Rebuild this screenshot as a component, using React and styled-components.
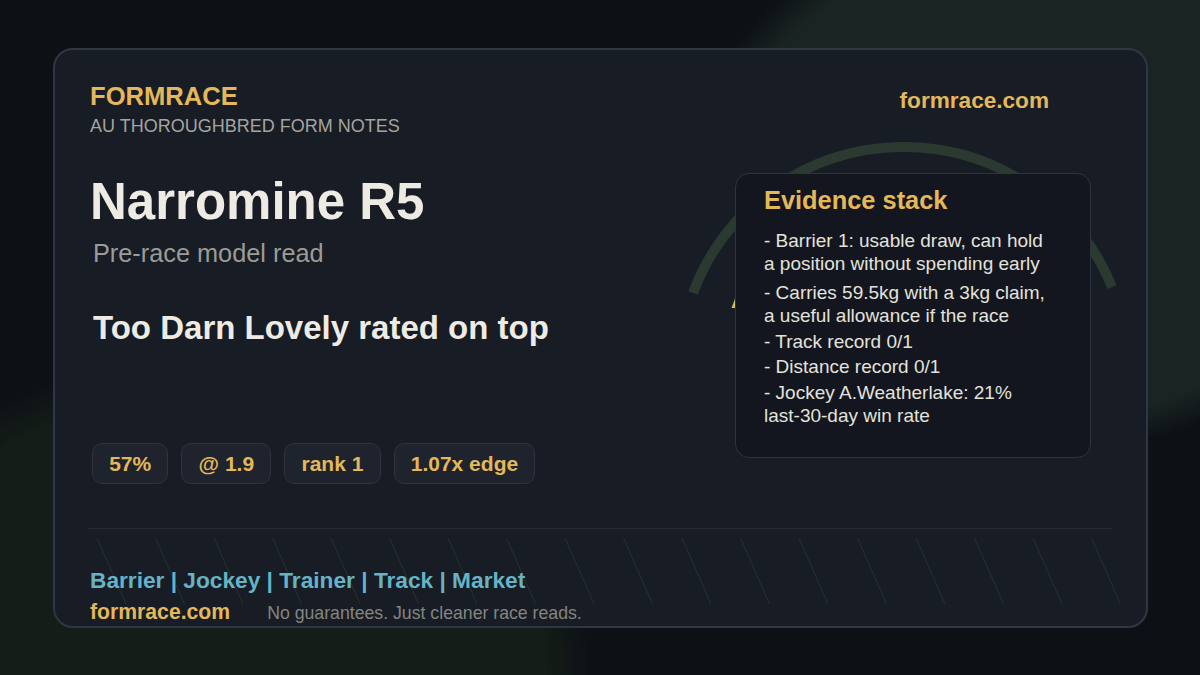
import React from "react";
import styled, { createGlobalStyle } from "styled-components";

const GlobalStyle = createGlobalStyle`
    html, body {
        margin: 0;
        padding: 0;
        background: #0d1116;
    }
    * {
        box-sizing: border-box;
    }
`;

const gold = "#e4b85a";

const Page = styled.div`
    width: 1200px;
    height: 675px;
    overflow: hidden;
    padding: 48px 53px;
    font-family: "Liberation Sans", Arial, sans-serif;
    background:
        radial-gradient(ellipse 392px 320px at 200px 680px, #141d17 0%, #141d17 88%, rgba(20, 29, 23, 0) 100%),
        radial-gradient(ellipse 350px 273px at 1040px 180px, #1a2422 0%, #1a2422 88%, rgba(26, 36, 34, 0) 100%),
        #0d1116;
`;

const Card = styled.div`
    position: relative;
    width: 1095px;
    height: 580px;
    padding: 30px 33px 0;
    background: #171c25;
    border: 2px solid #313645;
    border-radius: 20px;
    overflow: hidden;
`;

const Header = styled.header`
    display: flex;
    justify-content: space-between;
    align-items: flex-start;
`;

const Brand = styled.div`
    margin-left: 2px;
    font-size: 25.6px;
    line-height: 32px;
    font-weight: 700;
    color: ${gold};
`;

const Tagline = styled.div`
    margin: 3px 0 0 2px;
    font-size: 18px;
    line-height: 22px;
    color: #a5a59f;
`;

const Site = styled.div`
    margin: 6px 64px 0 0;
    font-size: 22.6px;
    line-height: 30px;
    font-weight: 700;
    color: ${gold};
`;

const Main = styled.main`
    display: flex;
    justify-content: space-between;
    margin-top: 36px;
`;

const Title = styled.h1`
    margin: 1px 0 0 2px;
    font-size: 51px;
    line-height: 56px;
    font-weight: 700;
    color: #eeebe4;
`;

const Subtitle = styled.div`
    margin: 8px 0 0 5px;
    font-size: 25.3px;
    line-height: 30px;
    color: #9c9c96;
`;

const Pick = styled.div`
    margin: 40px 0 0 5px;
    font-size: 33px;
    line-height: 40px;
    font-weight: 700;
    color: #eeebe4;
`;

const Chips = styled.div`
    display: flex;
    gap: 13px;
    margin: 95px 0 0 4px;
`;

const Chip = styled.div`
    display: flex;
    align-items: center;
    height: 41px;
    padding: 0 16.2px;
    font-size: 21px;
    font-weight: 700;
    color: ${gold};
    background: #1e232e;
    border: 1px solid #2e3341;
    border-radius: 10px;
`;

const Side = styled.aside`
    position: relative;
    width: 356px;
    margin-right: 22px;
`;

const Arc = styled.svg`
    position: absolute;
    left: -50px;
    top: -34px;
    overflow: visible;
`;

const HiddenLabel = styled.span`
    position: absolute;
    left: -4px;
    top: 115px;
    font-size: 22px;
    font-weight: 700;
    color: ${gold};
`;

const Panel = styled.div`
    position: relative;
    height: 285px;
    padding: 11px 28px 0;
    background: #13161e;
    border: 1px solid #2e3341;
    border-radius: 14px;
`;

const PanelTitle = styled.h2`
    margin: 0 0 14px;
    font-size: 25.4px;
    line-height: 30px;
    font-weight: 700;
    color: ${gold};
`;

const Evidence = styled.div`
    margin-top: ${(p) => p.$gap}px;
    font-size: 19px;
    line-height: 23px;
    color: #e4e2dc;
    white-space: pre-line;
`;

const Footer = styled.footer`
    position: relative;
    margin-top: 44px;
    padding: 37px 0 0 2px;
    border-top: 1px solid #252a35;
`;

const Hatch = styled.svg`
    position: absolute;
    left: 0;
    top: 9px;
    overflow: visible;
`;

const Factors = styled.div`
    position: relative;
    font-size: 22.7px;
    line-height: 28px;
    font-weight: 700;
    color: #66b3c6;
`;

const FooterRow = styled.div`
    position: relative;
    display: flex;
    align-items: baseline;
    gap: 37px;
    margin-top: 5px;
    line-height: 26px;
`;

const FooterSite = styled.span`
    font-size: 21.2px;
    font-weight: 700;
    color: ${gold};
`;

const Disclaimer = styled.span`
    font-size: 17.7px;
    color: #85857f;
`;

const evidence = [
    ["- Barrier 1: usable draw, can hold\na position without spending early", 0],
    ["- Carries 59.5kg with a 3kg claim,\na useful allowance if the race", 6],
    ["- Track record 0/1", 3],
    ["- Distance record 0/1", 2],
    ["- Jockey A.Weatherlake: 21%\nlast-30-day win rate", 3],
];

const chips = ["57%", "@ 1.9", "rank 1", "1.07x edge"];

const hatchLines = Array.from({ length: 18 }, (_, i) => 9 + i * 58.5);

export default function App() {
    return (
        <Page>
            <GlobalStyle />
            <Card>
                <Header>
                    <div>
                        <Brand>FORMRACE</Brand>
                        <Tagline>AU THOROUGHBRED FORM NOTES</Tagline>
                    </div>
                    <Site>formrace.com</Site>
                </Header>

                <Main>
                    <div>
                        <Title>Narromine R5</Title>
                        <Subtitle>Pre-race model read</Subtitle>
                        <Pick>Too Darn Lovely rated on top</Pick>
                        <Chips>
                            {chips.map((chip) => (
                                <Chip key={chip}>{chip}</Chip>
                            ))}
                        </Chips>
                    </div>
                    <Side>
                        <Arc width="440" height="170" viewBox="0 0 440 170" fill="none">
                            <path d="M8 154 A225 225 0 0 1 427 148" stroke="#2b3a30" strokeWidth="10" />
                        </Arc>
                        <HiddenLabel>A</HiddenLabel>
                        <Panel>
                            <PanelTitle>Evidence stack</PanelTitle>
                            {evidence.map(([text, gap]) => (
                                <Evidence key={text} $gap={gap}>
                                    {text}
                                </Evidence>
                            ))}
                        </Panel>
                    </Side>
                </Main>

                <Footer>
                    <Hatch width="1040" height="70" viewBox="0 0 1040 70" fill="none">
                        {hatchLines.map((x) => (
                            <line key={x} x1={x} y1="0" x2={x + 29} y2="66" stroke="#232f28" strokeWidth="1.2" />
                        ))}
                    </Hatch>
                    <Factors>Barrier | Jockey | Trainer | Track | Market</Factors>
                    <FooterRow>
                        <FooterSite>formrace.com</FooterSite>
                        <Disclaimer>No guarantees. Just cleaner race reads.</Disclaimer>
                    </FooterRow>
                </Footer>
            </Card>
        </Page>
    );
}
